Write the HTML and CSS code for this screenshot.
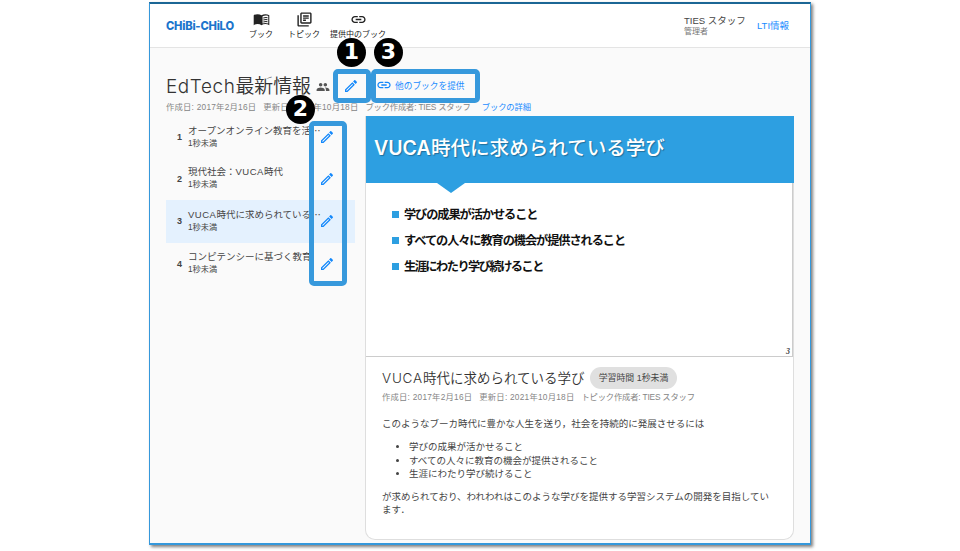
FILE: index.html
```html
<!DOCTYPE html>
<html lang="ja">
<head>
<meta charset="utf-8">
<title>CHiBi-CHiLO</title>
<link rel="stylesheet" href="styles.css">
</head>
<body>
<svg class="defs" width="0" height="0">
  <symbol id="edit" viewBox="0 0 24 24"><path d="M14.06 9.02l.92.92L5.92 19H5v-.92l9.06-9.06M17.66 3c-.25 0-.51.1-.7.29l-1.83 1.83 3.75 3.75 1.83-1.83c.39-.39.39-1.02 0-1.41l-2.34-2.34c-.2-.2-.45-.29-.71-.29zm-3.6 3.19L3 17.25V21h3.75L17.81 9.94l-3.75-3.75z"/></symbol>
  <symbol id="link" viewBox="0 0 24 24"><path d="M3.9 12c0-1.710 1.390-3.100 3.100-3.100h4V7H7c-2.760 0-5 2.240-5 5s2.240 5 5 5h4v-1.900H7c-1.710 0-3.100-1.390-3.100-3.100zM8 13h8v-2H8v2zm9-6h-4v1.900h4c1.710 0 3.100 1.390 3.100 3.100s-1.390 3.100-3.100 3.100h-4V17h4c2.760 0 5-2.240 5-5s-2.240-5-5-5z"/></symbol>
  <symbol id="topics" viewBox="0 0 24 24"><path d="M4 6H2v14c0 1.1.9 2 2 2h14v-2H4V6zm16-4H8c-1.1 0-2 .9-2 2v12c0 1.1.9 2 2 2h12c1.1 0 2-.9 2-2V4c0-1.1-.9-2-2-2zm0 14H8V4h12v12zM10 9h8v2h-8zm0 3h4v2h-4zm0-6h8v2h-8z"/></symbol>
  <symbol id="people" viewBox="0 0 24 24"><path d="M16 11c1.66 0 2.99-1.34 2.99-3S17.66 5 16 5c-1.66 0-3 1.34-3 3s1.34 3 3 3zm-8 0c1.66 0 2.99-1.34 2.99-3S9.66 5 8 5C6.34 5 5 6.34 5 8s1.34 3 3 3zm0 2c-2.33 0-7 1.17-7 3.5V19h14v-2.5c0-2.33-4.67-3.5-7-3.5zm8 0c-.29 0-.62.02-.97.05 1.16.84 1.97 1.97 1.97 3.45V19h6v-2.5c0-2.33-4.67-3.5-7-3.5z"/></symbol>
  <symbol id="book" viewBox="0 0 24 24"><path d="M1 6c1.500-1 3.500-1.500 5.500-1.500S10.500 5 12 6v14c-1.500-1-3.500-1.500-5.500-1.500S2.700 18.900 1 20zM12 6c1.500-1 3.500-1.500 5.500-1.500S21.500 5 23 6v14c-1.600-1-3.500-1.500-5.500-1.500S13.500 19 12 20zM13.500 7.300v10.500c2.500-1.100 5.500-1.100 8 0V7c-2.500-1-5.500-.8-8 .3z" fill-rule="evenodd"/><path d="M14.500 9.200q3-1.100 6-.4v1.500q-3-.7-6 .4zM14.500 12q3-1.100 6-.4v1.500q-3-.7-6 .4zM14.500 14.800q3-1.100 6-.4v1.500q-3-.7-6 .4z"/></symbol>
</svg>
<div class="frame">
  <header class="bar">
    <div class="logo">CHiBi-CHiLO</div>
    <nav class="nav">
      <a class="nav-book"><svg><use href="#book"/></svg><span>ブック</span></a>
      <a class="nav-topic"><svg><use href="#topics"/></svg><span>トピック</span></a>
      <a class="nav-link"><svg><use href="#link"/></svg><span>提供中のブック</span></a>
    </nav>
    <div class="user"><div class="user-name">TIES スタッフ</div><div class="role">管理者</div></div>
    <a class="lti">LTI情報</a>
  </header>
  <main class="content">
    <div class="title-row">
      <h1><span>EdTech</span>最新情報</h1>
      <svg class="people"><use href="#people"/></svg>
      <svg class="pen"><use href="#edit"/></svg>
      <a class="offer"><svg><use href="#link"/></svg><span>他のブックを提供</span></a>
    </div>
    <div class="meta book-meta"><span>作成日: 2017年2月16日</span><span>更新日: 2021年10月18日</span><span class="author">ブック作成者: TIES スタッフ</span><a>ブックの詳細</a></div>
    <div class="columns">
      <ol class="toc">
        <li><b>1</b><div class="item"><div>オープンオンライン教育を活<i>…</i></div><small>1秒未満</small></div><svg class="pen"><use href="#edit"/></svg></li>
        <li><b>2</b><div class="item"><div>現代社会：<em>VUCA</em>時代</div><small>1秒未満</small></div><svg class="pen"><use href="#edit"/></svg></li>
        <li class="active"><b>3</b><div class="item"><div><em>VUCA</em>時代に求められている<i>…</i></div><small>1秒未満</small></div><svg class="pen"><use href="#edit"/></svg></li>
        <li><b>4</b><div class="item"><div>コンピテンシーに基づく教育</div><small>1秒未満</small></div><svg class="pen"><use href="#edit"/></svg></li>
      </ol>
      <section class="topic">
        <div class="slide">
          <div class="slide-head"><span>VUCA</span>時代に求められている学び</div>
          <ul>
            <li>学びの成果が活かせること</li>
            <li>すべての人々に教育の機会が提供されること</li>
            <li class="tight">生涯にわたり学び続けること</li>
          </ul>
          <span class="page">3</span>
        </div>
        <div class="detail">
          <div class="detail-title"><h2><span>VUCA</span>時代に求められている学び</h2><span class="chip">学習時間 1秒未満</span></div>
          <div class="meta"><span>作成日: 2017年2月16日</span><span>更新日: 2021年10月18日</span><span class="author">トピック作成者: TIES スタッフ</span></div>
          <p class="lead">このようなブーカ時代に豊かな人生を送り，社会を持続的に発展させるには</p>
          <ul>
            <li>学びの成果が活かせること</li>
            <li>すべての人々に教育の機会が提供されること</li>
            <li>生涯にわたり学び続けること</li>
          </ul>
          <p class="closing">が求められており、われわれはこのような学びを提供する学習システムの開発を目指しています．</p>
        </div>
      </section>
    </div>
  </main>
  <div class="mark mark-edit"></div>
  <div class="mark mark-offer"></div>
  <div class="mark mark-list"></div>
  <div class="num num-1">1</div>
  <div class="num num-2">2</div>
  <div class="num num-3">3</div>
</div>
</body>
</html>
```
FILE: styles.css
```css
* { box-sizing: border-box; }
body { margin: 0; height: 551px; padding-top: 2px; background: #fff; color: #444; font-family: "Liberation Sans", "Noto Sans CJK JP", sans-serif; font-size: 9.5px; font-weight: 400; }
h1, h2, p, ul, ol { margin: 0; padding: 0; font-weight: 400; }
ol, ul { list-style: none; }
svg { fill: currentColor; display: block; flex: none; }
.defs { position: absolute; }
.frame { position: relative; width: 662px; height: 543px; margin-left: 149px; background: #fafafa; border: 1px solid #3598db; border-top: 2px solid #1b6695; border-bottom-width: 2px; box-shadow: 2px 2px 3px rgba(0,0,0,.5); white-space: nowrap; }
.bar { display: flex; height: 44px; background: #fff; border-bottom: 1px solid #e4e4e4; padding-left: 16px; }
.logo { width: 83px; padding-top: 12px; font: 800 11.2px/20px Inter, sans-serif; color: #1b74cc; letter-spacing: -.22px; }
.nav { display: flex; width: 435px; }
.nav a { display: flex; flex-direction: column; align-items: center; padding-top: 7px; font-size: 8px; line-height: 12px; color: #222; }
.nav svg { width: 17px; height: 17px; margin-bottom: 1px; }
.nav-book { width: 24px; }
.nav-topic { width: 32px; margin-left: 15px; }
.nav-link { width: 56px; margin-left: 10px; }
.user { width: 73px; padding-top: 11px; }
.user-name { font-size: 9.5px; line-height: 12px; }
.role { font-size: 8px; line-height: 10px; color: #777; }
.lti { padding-top: 14px; line-height: 16px; font-size: 9.5px; color: #1a8cff; }
.content { padding-left: 16px; }
.title-row { display: flex; height: 53px; padding-top: 24px; }
h1 { width: 146px; font: 300 18.9px/30px Inter, "Noto Sans CJK JP", sans-serif; font-weight: 350; color: #333; }
h1 span { letter-spacing: .6px; }
.people { width: 14px; height: 14px; margin: 8px 0 0 4px; color: #555; }
.pen { width: 16px; height: 16px; color: #1388fb; }
.title-row .pen { margin: 6px 0 0 13px; }
.offer { display: flex; height: 28px; align-items: center; margin: -1px 0 0 17px; gap: 3px; color: #1a8cff; font-size: 8.7px; }
.offer svg { width: 16px; height: 16px; color: #1388fb; }
.meta { display: flex; gap: 7px; height: 12px; font-size: 8.3px; line-height: 12px; color: #858585; letter-spacing: .24px; }
.meta a { color: #1a8cff; margin-left: 4px; letter-spacing: -.1px; }
.meta .author { letter-spacing: -.18px; }
.columns { display: flex; gap: 10px; margin-top: 3px; }
.toc { width: 189px; }
.toc li { display: flex; height: 42.2px; padding-left: 11px; }
.toc .active { background: #e4f1fe; }
.toc b { width: 11px; padding-top: 15px; font: bold 9px/12px "Liberation Sans", sans-serif; padding-top: 15px; }
.item { width: 132px; padding-top: 7px; line-height: 14px; }
.item i { font-family: "Noto Sans CJK JP", sans-serif; font-style: normal; }
.item em { font-style: normal; letter-spacing: .5px; }
.item small { display: block; font-size: 8.2px; line-height: 12px; }
.toc .pen { margin: 13px 0 0 -1px; }
.topic { width: 429px; height: 424px; background: #fff; border: 1px solid #dedede; border-top: 0; border-radius: 0 0 10px 10px; }
.slide { position: relative; height: 241px; border-bottom: 1px solid #ccc; border-right: 1px solid #ccc; }
.slide-head { position: relative; width: 428px; height: 67px; padding: 16px 0 0 8px; background: #2d9fe1; color: #fff; font-size: 19.55px; line-height: 32px; font-weight: 500; text-shadow: 1px 1px 1px rgba(0,0,0,.3); }
.slide-head span { display: inline-block; width: 57px; font: 600 19.5px/32px Inter, sans-serif; }
.slide-head::after { content: ""; position: absolute; left: 71px; top: 67px; border: 14.5px solid transparent; border-top: 10px solid #2d9fe1; border-bottom: 0; }
.slide ul { padding: 18px 0 0 26px; }
.slide li { display: flex; align-items: center; height: 26px; font-size: 12.2px; font-weight: 700; color: #111; letter-spacing: -1.07px; }
.slide li::before { content: ""; width: 7px; height: 7px; margin-right: 5px; background: #2d9fe1; }
.slide .tight { letter-spacing: -1.5px; }
.page { position: absolute; right: 2px; bottom: 0; font: italic bold 8px/8px "Liberation Serif", serif; }
.detail { padding: 10px 16px 0; }
.detail-title { display: flex; height: 23px; }
h2 { width: 208px; font: 300 13.5px/23px Inter, "Noto Sans CJK JP", sans-serif; font-weight: 350; color: #333; }
h2 span { letter-spacing: .8px; }
.chip { width: 87px; height: 22px; border-radius: 11px; background: #e0e0e0; text-align: center; font-size: 8.9px; line-height: 22px; }
.detail .meta { margin-top: 1px; }
.detail p { line-height: 13.4px; white-space: normal; }
.detail .lead { margin: 14px 0 10px; }
.detail ul { margin-bottom: 9px; padding-left: 27px; list-style: disc; }
.detail li { line-height: 13.5px; }
.detail .closing { padding-right: 6px; }
.mark { position: absolute; border: 5px solid #3799dc; border-radius: 5px; }
.mark-edit { left: 183px; top: 65px; width: 38px; height: 34px; }
.mark-offer { left: 221px; top: 65px; width: 109px; height: 34px; }
.mark-list { left: 159px; top: 117px; width: 38px; height: 165px; }
.num { position: absolute; width: 29px; height: 29px; border-radius: 50%; background: #000; color: #fff; text-align: center; font: bold 22px/28px "DejaVu Sans", sans-serif; }
.num-1 { left: 187px; top: 34px; }
.num-2 { left: 136px; top: 91px; }
.num-3 { left: 224px; top: 34px; }
```
